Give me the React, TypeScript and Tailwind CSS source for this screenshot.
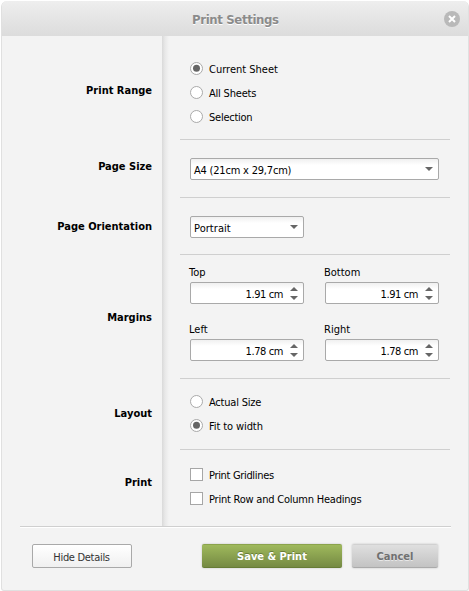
import type { ReactNode } from "react";

function Section({ label, height, labelTop, last, children }: { label: string; height: string; labelTop: string; last?: boolean; children: ReactNode }) {
  return (
    <div className={`flex ${height}`}>
      <div className={`w-[160px] shrink-0 pr-[10px] text-right text-[11px] leading-[16px] font-bold ${labelTop}`}>{label}</div>
      <div className="flex w-[306px] bg-[linear-gradient(to_right,#d9d9d9,#e8e8e8_3px,#f3f3f3_7px)] pl-[18px]">
        <div className={`w-[270px] pl-[10px] ${last ? "" : "border-b border-[#cfcfcf] shadow-[0_1px_0_#fff]"}`}>{children}</div>
      </div>
    </div>
  );
}

function Choice({ children, checked, square, tracking }: { children: string; checked?: boolean; square?: boolean; tracking: string }) {
  return (
    <div className="flex h-[13px] items-center gap-[6px]">
      <svg width="13" height="13" viewBox="0 0 13 13" className="shrink-0">
        {square ? (
          <rect x="0.5" y="0.5" width="12" height="12" fill="#fff" stroke="#a6a6a6" />
        ) : (
          <circle cx="6.5" cy="6.5" r="6" fill="#fff" stroke="#a9a9a9" />
        )}
        {checked && <circle cx="6.5" cy="6.3" r="3.5" fill="#656565" />}
      </svg>
      <span className={`pt-[2px] text-[11px] leading-[13px] whitespace-nowrap ${tracking}`}>{children}</span>
    </div>
  );
}

const box = "flex h-[22px] items-center rounded-[2px] border border-[#a9a9a9] bg-[linear-gradient(#f0f0f0,#fff_6px)] text-[11px]";

function Select({ value, width, tracking }: { value: string; width: string; tracking: string }) {
  return (
    <div className={`${box} ${width} justify-between pr-[5px] pl-[3px]`}>
      <span className={`pt-[4px] leading-[14px] whitespace-nowrap ${tracking}`}>{value}</span>
      <svg width="8" height="4" viewBox="0 0 8 4"><path d="M0 0h8L4 4z" fill="#666" /></svg>
    </div>
  );
}

function Margin({ label, value }: { label: string; value: string }) {
  return (
    <div className="w-[114px]">
      <div className="-ml-px h-[17px] pt-px text-[11px] leading-[14px]">{label}</div>
      <div className={`${box} justify-end pr-[5px]`}>
        <span className="pt-[4px] pr-[7px] leading-[14px] tracking-[-0.4px]">{value}</span>
        <svg width="8" height="13" viewBox="0 0 8 13"><path d="M0 4h8L4 0zM0 9h8l-4 4z" fill="#666" /></svg>
      </div>
    </div>
  );
}

export default function App() {
  return (
    <div className="h-[591px] w-[469px] overflow-hidden bg-white pt-px pl-px font-['DejaVu_Sans_Condensed','DejaVu_Sans',sans-serif] text-black">
      <div className="h-[590px] w-[468px] overflow-hidden rounded-t-[6px] rounded-b-[3px] border border-t-0 border-[#e0e0e0] bg-[#f3f3f3]">
        <div className="flex h-[35px] items-center bg-linear-to-b from-[#eee] to-[#dcdcdc] pl-[190px]">
          <h1 className="w-[220px] pt-[2px] text-[13px] leading-[18px] font-bold tracking-[-0.35px] whitespace-nowrap text-[#8b8b8b] [text-shadow:0_1px_0_#fff]">Print Settings</h1>
          <svg width="16" height="16" viewBox="0 0 16 16" className="ml-[32px]">
            <circle cx="8" cy="8" r="8" fill="#b9b9b9" />
            <path d="M5 5l6 6M11 5l-6 6" stroke="#fff" strokeWidth="2" />
          </svg>
        </div>
        <Section label="Print Range" height="h-[104px]" labelTop="pt-[47px]">
          <div className="flex flex-col gap-[11px] pt-[26px]">
            <Choice checked tracking="">Current Sheet</Choice>
            <Choice tracking="tracking-[-0.2px]">All Sheets</Choice>
            <Choice tracking="tracking-[-0.25px]">Selection</Choice>
          </div>
        </Section>
        <Section label="Page Size" height="h-[58px]" labelTop="pt-[19px]">
          <div className="pt-[18px]"><Select value="A4 (21cm x 29,7cm)" width="w-[249px]" tracking="tracking-[-0.2px]" /></div>
        </Section>
        <Section label="Page Orientation" height="h-[57px]" labelTop="pt-[21px]">
          <div className="pt-[18px]"><Select value="Portrait" width="w-[114px]" tracking="tracking-[0.05px]" /></div>
        </Section>
        <Section label="Margins" height="h-[124px]" labelTop="pt-[55px]">
          <div className="grid grid-cols-[114px_114px] gap-x-[21px] gap-y-[18px] pt-[10px]">
            <Margin label="Top" value="1.91 cm" />
            <Margin label="Bottom" value="1.91 cm" />
            <Margin label="Left" value="1.78 cm" />
            <Margin label="Right" value="1.78 cm" />
          </div>
        </Section>
        <Section label="Layout" height="h-[71px]" labelTop="pt-[27px]">
          <div className="flex flex-col gap-[11px] pt-[16px]">
            <Choice tracking="tracking-[-0.2px]">Actual Size</Choice>
            <Choice checked tracking="tracking-[-0.1px]">Fit to width</Choice>
          </div>
        </Section>
        <Section label="Print" height="h-[76px]" labelTop="pt-[25px]" last>
          <div className="flex flex-col gap-[11px] pt-[18px]">
            <Choice square tracking="tracking-[-0.33px]">Print Gridlines</Choice>
            <Choice square tracking="tracking-[-0.22px]">Print Row and Column Headings</Choice>
          </div>
        </Section>
        <div className="mr-[17px] ml-[18px] flex border-t border-[#cfcfcf] pt-[17px] pl-[12px] shadow-[inset_0_1px_0_#fff]">
          <button className="h-[24px] w-[100px] rounded-[2px] border border-[#a9a9a9] bg-linear-to-b from-white to-[#f0f0f0] pt-[4px] pr-px text-[11px] tracking-[-0.3px] text-[#333]">Hide Details</button>
          <button className="ml-[70px] h-[24px] w-[140px] rounded-[2px] border-t border-b border-t-[#8ba34c] border-b-[#667c35] bg-linear-to-b from-[#9fb95c] to-[#758a43] pt-[3px] text-[11px] font-bold text-white shadow-[0_0_2px_#bbb] [text-shadow:0_-1px_0_#687c38]">Save &amp; Print</button>
          <button className="ml-[10px] h-[24px] w-[86px] rounded-[2px] border-t border-b border-t-[#d1d1d1] border-b-[#aaa] bg-linear-to-b from-[#dfdfdf] to-[#c3c3c3] pt-[3px] text-[11px] font-bold text-[#707070] shadow-[0_0_2px_#bbb] [text-shadow:0_1px_0_#e8e8e8]">Cancel</button>
        </div>
      </div>
    </div>
  );
}
